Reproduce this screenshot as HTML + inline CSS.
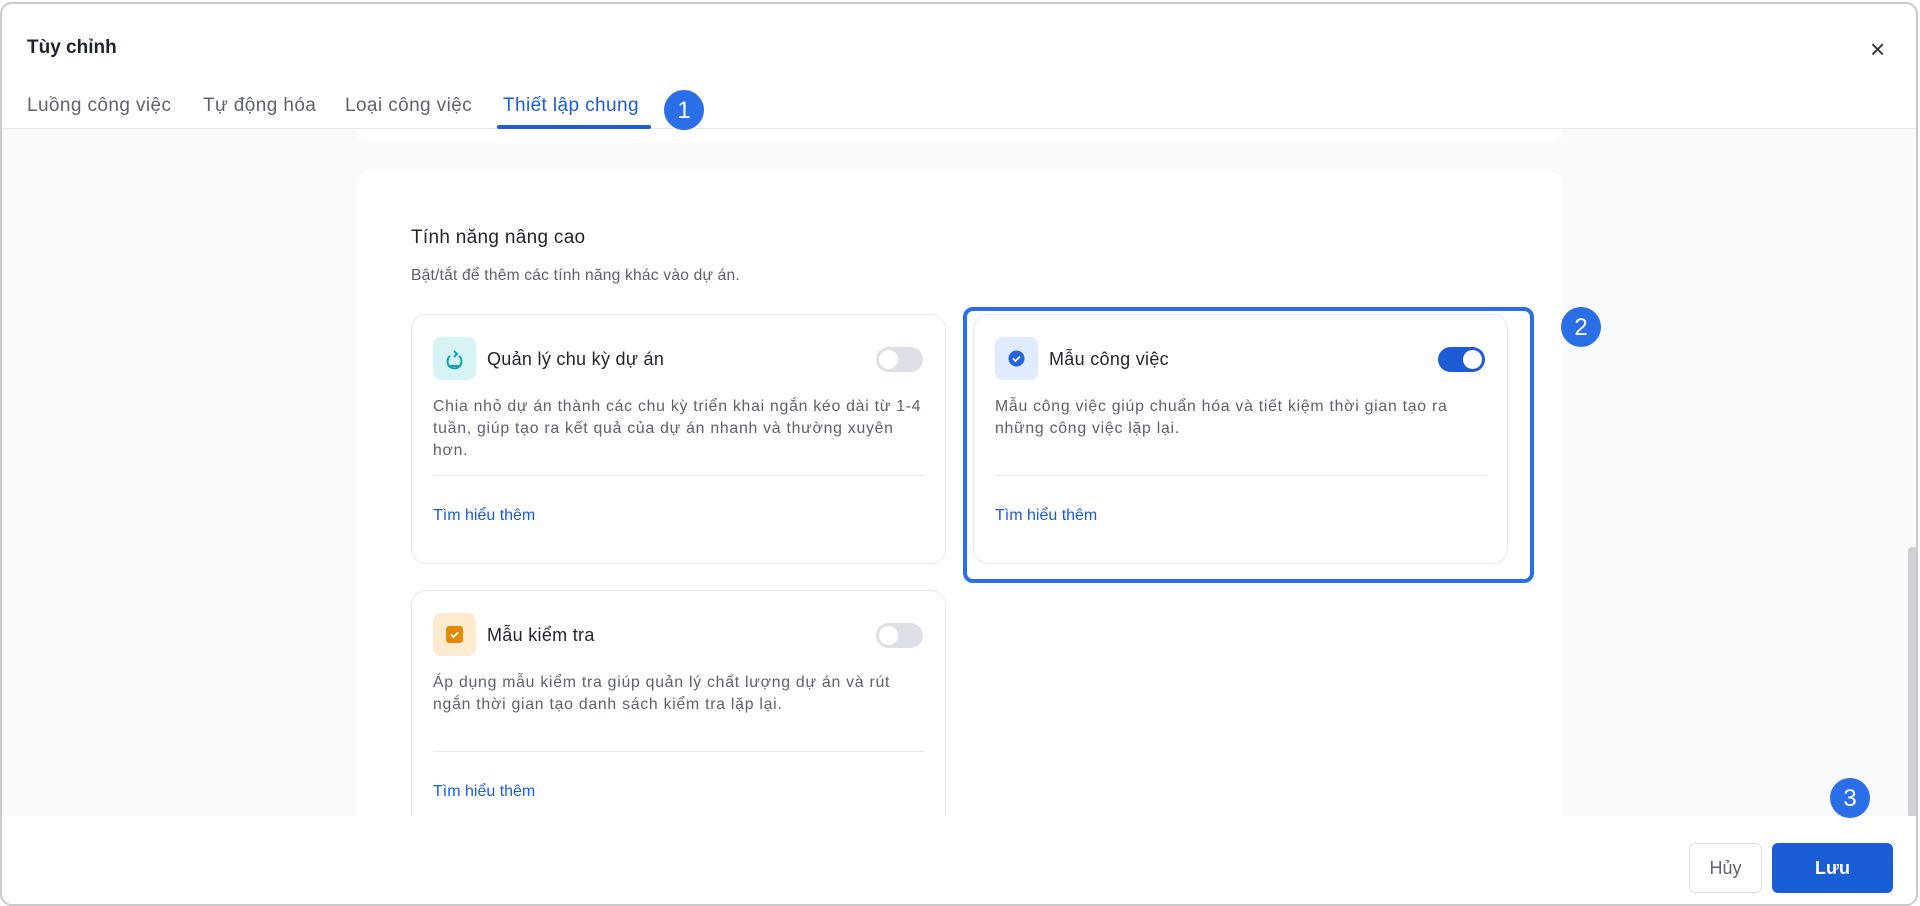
<!DOCTYPE html>
<html><head><meta charset="utf-8"><style>
*{box-sizing:border-box;margin:0;padding:0}
body{width:1920px;height:906px;overflow:hidden;background:#fff;font-family:"Liberation Sans",sans-serif;position:relative}
.frame{position:absolute;left:0;top:2px;width:1918px;height:904px;border:2px solid #c9c9ce;border-radius:12px;overflow:hidden;background:#fff}
.abs{position:absolute}
.title{left:25px;top:33px;font-size:19px;font-weight:bold;color:#1f2430}
.tab{top:91px;font-size:19px;color:#5d6373;letter-spacing:0.4px}
.hdr{left:0;top:124px;width:100%;height:1px;background:#e6e8ec}
.gray{left:0;top:125px;width:100%;height:689px;background:#f9fafb}
.card{background:#fff;border-radius:14px}
.fc{background:#fff;border:1px solid #e6e8ec;border-radius:15px;position:absolute}
.ic{position:absolute;left:21px;top:22px;width:43px;height:43px;border-radius:8px}
.ct{position:absolute;left:75px;top:34px;font-size:18px;font-weight:500;color:#1f2430;letter-spacing:0.3px}
.tg{position:absolute;right:22px;top:32px;width:47px;height:25px;border-radius:13px;background:#dde0e6}
.tg::after{content:"";position:absolute;left:3px;top:3px;width:19px;height:19px;border-radius:50%;background:#fff}
.tg.on{background:#1d5cd6}
.tg.on::after{left:25px}
.ds{position:absolute;left:21px;top:81px;width:500px;font-size:15.8px;line-height:22px;color:#5b6170;letter-spacing:0.75px;white-space:nowrap}
.dv{position:absolute;left:21px;right:20px;height:1px;background:#e8e9ed}
.lk{position:absolute;left:21px;font-size:16px;font-weight:500;color:#1a5cd9}
.badge{width:42px;height:42px;border-radius:50%;background:#2b6fe8;color:#fff;font-size:24px;text-align:center;line-height:42px;border:1px solid #fff}
</style></head><body>
<div class="frame">
<div class="abs gray"></div>
<div class="abs card" style="left:354px;top:110px;width:1207px;height:29px"></div>
<div class="abs" style="left:0;top:0;width:100%;height:124px;background:#fff"></div>
<div class="abs hdr"></div>
<div class="abs title">Tùy chỉnh</div>
<div class="abs" style="left:1868px;top:30px;font-size:26px;color:#333">×</div>
<div class="abs tab" style="left:25px">Luồng công việc</div>
<div class="abs tab" style="left:201px">Tự động hóa</div>
<div class="abs tab" style="left:343px">Loại công việc</div>
<div class="abs tab" style="left:501px;color:#1a5cd9">Thiết lập chung</div>
<div class="abs" style="left:495px;top:121px;width:154px;height:4px;background:#1a5cd9;border-radius:2px"></div>
<div class="abs badge" style="left:661px;top:85px">1</div>
<div class="abs card" style="left:354px;top:167px;width:1207px;height:700px;border-radius:14px 14px 0 0"></div>
<div class="abs" style="left:409px;top:223px;font-size:19px;font-weight:500;color:#1f2430;letter-spacing:0.3px">Tính năng nâng cao</div>
<div class="abs" style="left:409px;top:263px;font-size:15.6px;color:#5b6170;letter-spacing:0.2px">Bật/tắt để thêm các tính năng khác vào dự án.</div>

<div class="fc" style="left:409px;top:310px;width:535px;height:250px">
<div class="ic" style="background:#d6f4f6"><svg width="43" height="43" viewBox="0 0 43 43"><path d="M17 19a7 7 0 1 0 9 0" fill="none" stroke="#12a3b0" stroke-width="2"/><path d="M21 14l3 3-3 3" fill="none" stroke="#12a3b0" stroke-width="2"/><path d="M15 29h13" stroke="#12a3b0" stroke-width="2"/></svg></div>
<div class="ct">Quản lý chu kỳ dự án</div><div class="tg"></div>
<div class="ds">Chia nhỏ dự án thành các chu kỳ triển khai ngắn kéo dài từ 1-4<br>tuần, giúp tạo ra kết quả của dự án nhanh và thường xuyên<br>hơn.</div>
<div class="dv" style="top:160px"></div><div class="lk" style="top:192px">Tìm hiểu thêm</div>
</div>

<div class="fc" style="left:971px;top:310px;width:535px;height:250px">
<div class="ic" style="background:#e0ebfd"><svg width="43" height="43" viewBox="0 0 43 43"><circle cx="21.5" cy="21.5" r="8" fill="#2563e0"/><path d="M18 21.5l2.5 2.5 4.5-4.5" fill="none" stroke="#fff" stroke-width="1.8"/></svg></div>
<div class="ct">Mẫu công việc</div><div class="tg on"></div>
<div class="ds">Mẫu công việc giúp chuẩn hóa và tiết kiệm thời gian tạo ra<br>những công việc lặp lại.</div>
<div class="dv" style="top:160px"></div><div class="lk" style="top:192px">Tìm hiểu thêm</div>
</div>
<div class="abs" style="left:961px;top:303px;width:571px;height:276px;border:4px solid #2b6fe8;border-radius:10px"></div>
<div class="abs badge" style="left:1558px;top:302px">2</div>

<div class="fc" style="left:409px;top:586px;width:535px;height:300px">
<div class="ic" style="background:#fdebd0"><svg width="43" height="43" viewBox="0 0 43 43"><rect x="13" y="13" width="17" height="17" rx="3" fill="#e38a0b"/><path d="M18 21.5l2.5 2.5 4.5-4.5" fill="none" stroke="#fff" stroke-width="1.8"/></svg></div>
<div class="ct">Mẫu kiểm tra</div><div class="tg"></div>
<div class="ds">Áp dụng mẫu kiểm tra giúp quản lý chất lượng dự án và rút<br>ngắn thời gian tạo danh sách kiểm tra lặp lại.</div>
<div class="dv" style="top:160px"></div><div class="lk" style="top:192px">Tìm hiểu thêm</div>
</div>

<div class="abs" style="left:1906px;top:543px;width:10px;height:271px;background:#d0d1d5;border-radius:4px"></div>
<div class="abs" style="left:0;top:812px;width:100%;height:94px;background:#fff"></div>
<div class="abs badge" style="left:1827px;top:773px">3</div>
<div class="abs" style="left:1687px;top:839px;width:73px;height:50px;border:1px solid #dfe1e6;border-radius:6px;text-align:center;line-height:48px;font-size:18px;color:#5d6373">Hủy</div>
<div class="abs" style="left:1770px;top:839px;width:121px;height:50px;background:#1b5cd7;border-radius:6px;text-align:center;line-height:50px;font-size:18px;font-weight:bold;color:#fff">Lưu</div>
</div>
</body></html>
